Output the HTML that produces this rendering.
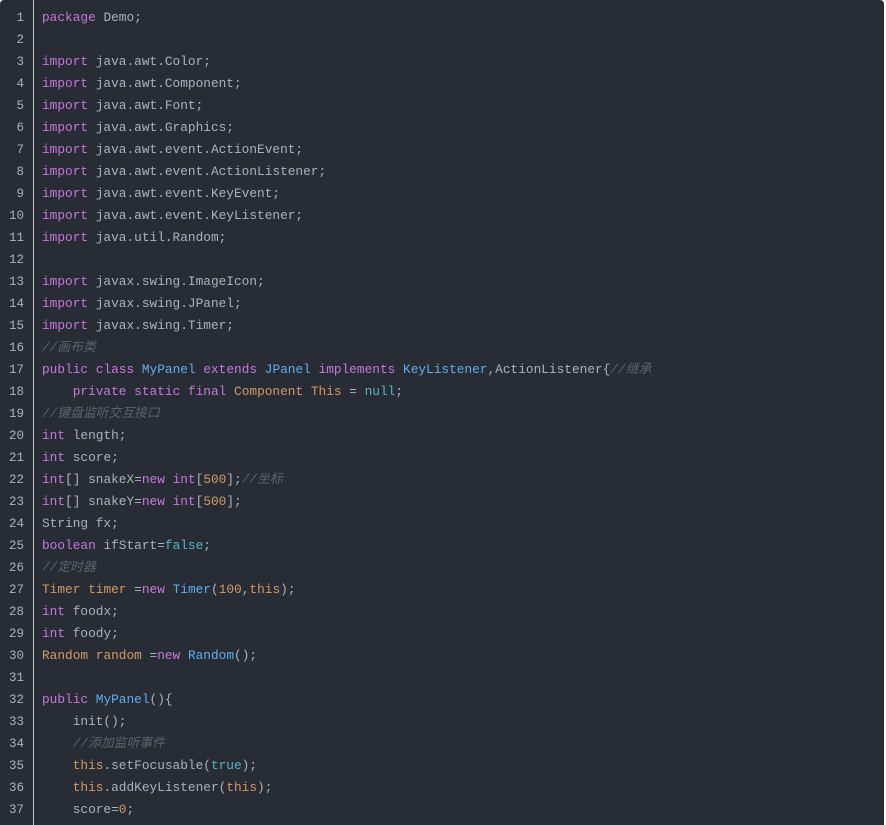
<!DOCTYPE html><html><head><meta charset="utf-8"><style>
body{margin:0;background:#fff;width:886px;height:825px;overflow:hidden}
.c{position:absolute;left:0;top:0;width:884px;height:825px;background:#282c34;border-radius:4px 4px 0 0}
.g{position:absolute;left:33px;top:0;width:1px;height:825px;background:#c5c5c5}
pre{margin:0;position:absolute;top:7px;left:0;font-family:"Liberation Mono","Noto Sans CJK SC",monospace;font-size:12.8px;line-height:22px;color:#abb2bf}
.n{display:inline-block;width:24px;text-align:right;color:#abb2bf;margin-right:18px;font-size:12.5px}
.k{color:#c678dd}.t{color:#61aeee}.o{color:#d19a66}.l{color:#56b6c2}.m{color:#5c6370;font-style:italic}
</style></head><body><div class="c"></div><div class="g"></div><pre>
<span class="n">1</span><span class="k">package</span> Demo;
<span class="n">2</span>
<span class="n">3</span><span class="k">import</span> java.awt.Color;
<span class="n">4</span><span class="k">import</span> java.awt.Component;
<span class="n">5</span><span class="k">import</span> java.awt.Font;
<span class="n">6</span><span class="k">import</span> java.awt.Graphics;
<span class="n">7</span><span class="k">import</span> java.awt.event.ActionEvent;
<span class="n">8</span><span class="k">import</span> java.awt.event.ActionListener;
<span class="n">9</span><span class="k">import</span> java.awt.event.KeyEvent;
<span class="n">10</span><span class="k">import</span> java.awt.event.KeyListener;
<span class="n">11</span><span class="k">import</span> java.util.Random;
<span class="n">12</span>
<span class="n">13</span><span class="k">import</span> javax.swing.ImageIcon;
<span class="n">14</span><span class="k">import</span> javax.swing.JPanel;
<span class="n">15</span><span class="k">import</span> javax.swing.Timer;
<span class="n">16</span><span class="m">//画布类</span>
<span class="n">17</span><span class="k">public</span> <span class="k">class</span> <span class="t">MyPanel</span> <span class="k">extends</span> <span class="t">JPanel</span> <span class="k">implements</span> <span class="t">KeyListener</span>,ActionListener{<span class="m">//继承</span>
<span class="n">18</span>    <span class="k">private</span> <span class="k">static</span> <span class="k">final</span> <span class="o">Component</span> <span class="o">This</span> = <span class="l">null</span>;
<span class="n">19</span><span class="m">//键盘监听交互接口</span>
<span class="n">20</span><span class="k">int</span> length;
<span class="n">21</span><span class="k">int</span> score;
<span class="n">22</span><span class="k">int</span>[] snakeX=<span class="k">new</span> <span class="k">int</span>[<span class="o">500</span>];<span class="m">//坐标</span>
<span class="n">23</span><span class="k">int</span>[] snakeY=<span class="k">new</span> <span class="k">int</span>[<span class="o">500</span>];
<span class="n">24</span>String fx;
<span class="n">25</span><span class="k">boolean</span> ifStart=<span class="l">false</span>;
<span class="n">26</span><span class="m">//定时器</span>
<span class="n">27</span><span class="o">Timer</span> <span class="o">timer</span> =<span class="k">new</span> <span class="t">Timer</span>(<span class="o">100</span>,<span class="o">this</span>);
<span class="n">28</span><span class="k">int</span> foodx;
<span class="n">29</span><span class="k">int</span> foody;
<span class="n">30</span><span class="o">Random</span> <span class="o">random</span> =<span class="k">new</span> <span class="t">Random</span>();
<span class="n">31</span>
<span class="n">32</span><span class="k">public</span> <span class="t">MyPanel</span>(){
<span class="n">33</span>    init();
<span class="n">34</span>    <span class="m">//添加监听事件</span>
<span class="n">35</span>    <span class="o">this</span>.setFocusable(<span class="l">true</span>);
<span class="n">36</span>    <span class="o">this</span>.addKeyListener(<span class="o">this</span>);
<span class="n">37</span>    score=<span class="o">0</span>;
</pre></body></html>
